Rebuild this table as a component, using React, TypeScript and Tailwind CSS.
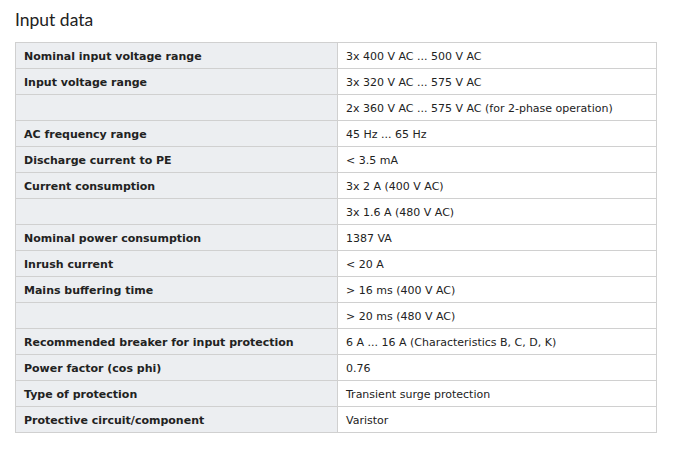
const rows: [string, string][] = [
  ["Nominal input voltage range", "3x 400 V AC ... 500 V AC"],
  ["Input voltage range", "3x 320 V AC ... 575 V AC"],
  ["", "2x 360 V AC ... 575 V AC (for 2-phase operation)"],
  ["AC frequency range", "45 Hz ... 65 Hz"],
  ["Discharge current to PE", "< 3.5 mA"],
  ["Current consumption", "3x 2 A (400 V AC)"],
  ["", "3x 1.6 A (480 V AC)"],
  ["Nominal power consumption", "1387 VA"],
  ["Inrush current", "< 20 A"],
  ["Mains buffering time", "> 16 ms (400 V AC)"],
  ["", "> 20 ms (480 V AC)"],
  ["Recommended breaker for input protection", "6 A ... 16 A (Characteristics B, C, D, K)"],
  ["Power factor (cos phi)", "0.76"],
  ["Type of protection", "Transient surge protection"],
  ["Protective circuit/component", "Varistor"],
]

export default function App() {
  return (
    <div className="min-h-screen bg-white px-[15px] pt-[8px]">
      {/* Heading */}
      <h2 className="text-[17.5px] leading-[24px] text-[#222] font-['Lato',sans-serif] mb-[10px]">Input data</h2>

      {/* Spec table */}
      <table className="w-[642px] border-collapse text-[11px] font-['DejaVu_Sans','Verdana',sans-serif] text-[#222]">
        <tbody>
          {rows.map(([label, value], i) => (
            <tr key={i} className="h-[26px]">
              <td className="w-[322px] border border-[#d0d0d0] bg-[#eceef1] px-[8px] pt-[3px] pb-0 font-bold align-middle">
                {label}
              </td>
              <td className="border border-[#d0d0d0] bg-white px-[8px] pt-[3px] pb-0 align-middle">{value}</td>
            </tr>
          ))}
        </tbody>
      </table>
    </div>
  )
}
